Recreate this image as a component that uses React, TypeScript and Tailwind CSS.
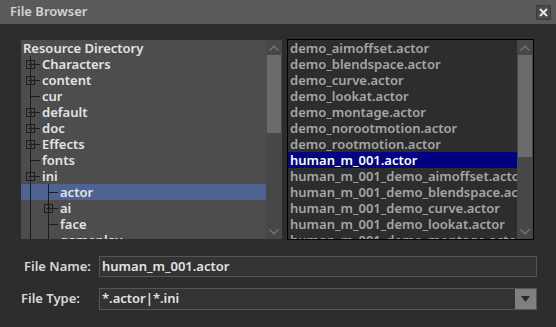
import type { ReactNode } from "react";

const FONT = "font-['Noto_Sans',_'Open_Sans',_sans-serif]";

type TreeRow = {
  label: string;
  level: 0 | 1 | 2;
  box?: "plus" | "minus";
  selected?: boolean;
};

const TREE: TreeRow[] = [
  { label: "Resource Directory", level: 0 },
  { label: "Characters", level: 1, box: "plus" },
  { label: "content", level: 1, box: "plus" },
  { label: "cur", level: 1 },
  { label: "default", level: 1, box: "plus" },
  { label: "doc", level: 1, box: "plus" },
  { label: "Effects", level: 1, box: "plus" },
  { label: "fonts", level: 1 },
  { label: "ini", level: 1, box: "minus" },
  { label: "actor", level: 2, selected: true },
  { label: "ai", level: 2, box: "plus" },
  { label: "face", level: 2 },
  { label: "gameplay", level: 2 },
];

const FILES = [
  "demo_aimoffset.actor",
  "demo_blendspace.actor",
  "demo_curve.actor",
  "demo_lookat.actor",
  "demo_montage.actor",
  "demo_norootmotion.actor",
  "demo_rootmotion.actor",
  "human_m_001.actor",
  "human_m_001_demo_aimoffset.actor",
  "human_m_001_demo_blendspace.actor",
  "human_m_001_demo_curve.actor",
  "human_m_001_demo_lookat.actor",
  "human_m_001_demo_montage.actor",
];

const LINE = "#1c1c1c";

function ExpandBox({ cx, kind }: { cx: number; kind: "plus" | "minus" }) {
  return (
    <g>
      <rect x={cx - 4} y={4.5} width={8} height={8} fill="none" stroke={LINE} />
      <line x1={cx - 2} y1={8.5} x2={cx + 3} y2={8.5} stroke={LINE} />
      {kind === "plus" ? (
        <line x1={cx + 0.5} y1={6} x2={cx + 0.5} y2={11} stroke={LINE} />
      ) : null}
    </g>
  );
}

/** Connector lines for one tree row, drawn at fixed offsets. */
function Connector({ row }: { row: TreeRow }) {
  if (row.level === 0) return <span className="w-[2px] shrink-0" />;
  const w = row.level === 1 ? 20 : 38;
  const cx = row.level === 1 ? 9 : 27;
  return (
    <svg width={w} height={16} className="shrink-0" aria-hidden>
      <line x1={9.5} y1={0} x2={9.5} y2={16} stroke={LINE} />
      {row.level === 2 || row.box === "minus" ? (
        <line x1={27.5} y1={row.level === 2 ? 0 : 12} x2={27.5} y2={16} stroke={LINE} />
      ) : null}
      <line x1={cx + 0.5} y1={8.5} x2={cx + 10} y2={8.5} stroke={LINE} />
      {row.box ? <ExpandBox cx={cx + 0.5} kind={row.box} /> : null}
    </svg>
  );
}

function Chevron({ up }: { up?: boolean }) {
  return (
    <div className="flex h-[15px] items-center justify-center">
      <svg width={10} height={6} aria-hidden>
        <polyline
          points={up ? "0.5,5.5 5,1 9.5,5.5" : "0.5,0.5 5,5 9.5,0.5"}
          fill="none"
          stroke="#7c7c7c"
          strokeWidth={1.2}
        />
      </svg>
    </div>
  );
}

function ScrollBar({ thumbTop, thumbHeight }: { thumbTop: number; thumbHeight: number }) {
  return (
    <div className="flex w-[16px] shrink-0 flex-col bg-[#474747]">
      <Chevron up />
      <div className="relative flex-1">
        <div
          className="absolute left-px right-px bg-[#6b6b6b]"
          style={{ top: thumbTop, height: thumbHeight }}
        />
      </div>
      <Chevron />
    </div>
  );
}

function Field({ label, indent, children }: { label: string; indent?: boolean; children: ReactNode }) {
  return (
    <div className="flex items-center">
      <span
        className={`w-[78px] text-[13px] font-semibold text-[#d8d8d8] ${indent ? "pl-[3px]" : ""}`}
      >
        {label}
      </span>
      {children}
    </div>
  );
}

export default function App() {
  return (
    <div className={`flex h-[327px] w-[556px] flex-col bg-[#2d2d2d] ${FONT}`}>
      <header className="flex h-[24px] shrink-0 items-center justify-between bg-[#5a5a5a] pl-[10px] pr-[5px]">
        <span className="text-[13px] font-semibold text-[#d4d4d4]">File Browser</span>
        <button
          type="button"
          className="flex size-[15px] items-center justify-center border border-[#3c3c3c] bg-[#4a4a4a]"
        >
          <svg width={9} height={9} aria-hidden>
            <path d="M1 1 L8 8 M8 1 L1 8" stroke="#e8e8e8" strokeWidth={2} />
          </svg>
        </button>
      </header>

      <div className="flex items-start gap-[5px] pl-[21px] pt-[15px]">
        <div className="mt-px flex h-[199px] w-[261px] overflow-hidden bg-[#4d4d4d]">
          <ul className="flex-1 overflow-hidden text-[13px] leading-[16px] font-semibold text-[#e4e4e4]">
            {TREE.map((row) => (
              <li
                key={row.label}
                className={`flex h-[16px] items-center whitespace-nowrap ${row.selected ? "bg-[#4f6393]" : ""}`}
              >
                <Connector row={row} />
                <span className={row.level === 0 ? "" : "pl-px"}>{row.label}</span>
              </li>
            ))}
          </ul>
          <ScrollBar thumbTop={0} thumbHeight={78} />
        </div>

        <div className="flex h-[201px] w-[247px] overflow-hidden border border-black bg-[#2d2d2d]">
          <ul className="flex-1 overflow-hidden text-[13px] leading-[16px] font-semibold text-[#a6a6a6]">
            {FILES.map((name) => (
              <li
                key={name}
                className={`h-[16px] whitespace-nowrap pl-[2px] ${name === "human_m_001.actor" ? "bg-[#000080] text-white" : ""}`}
              >
                {name}
              </li>
            ))}
          </ul>
          <ScrollBar thumbTop={0} thumbHeight={102} />
        </div>
      </div>

      <div className="flex flex-col gap-[11px] pl-[21px] pt-[16px]">
        <Field label="File Name:" indent>
          <div className="flex h-[21px] w-[438px] items-center border border-[#555] bg-[#333] px-[2px] text-[13px] font-semibold text-[#e4e4e4]">
            human_m_001.actor
          </div>
        </Field>
        <Field label="File Type:">
          <div className="flex h-[22px] w-[438px] border border-[#555] bg-[#333]">
            <span className="flex flex-1 items-center px-[2px] text-[13px] font-semibold text-[#e4e4e4]">
              *.actor|*.ini
            </span>
            <span className="flex w-[21px] items-center justify-center bg-[#808080]">
              <svg width={9} height={6} aria-hidden>
                <path d="M0 0 H9 L4.5 6 Z" fill="#2a2a2a" />
              </svg>
            </span>
          </div>
        </Field>
      </div>
    </div>
  );
}
